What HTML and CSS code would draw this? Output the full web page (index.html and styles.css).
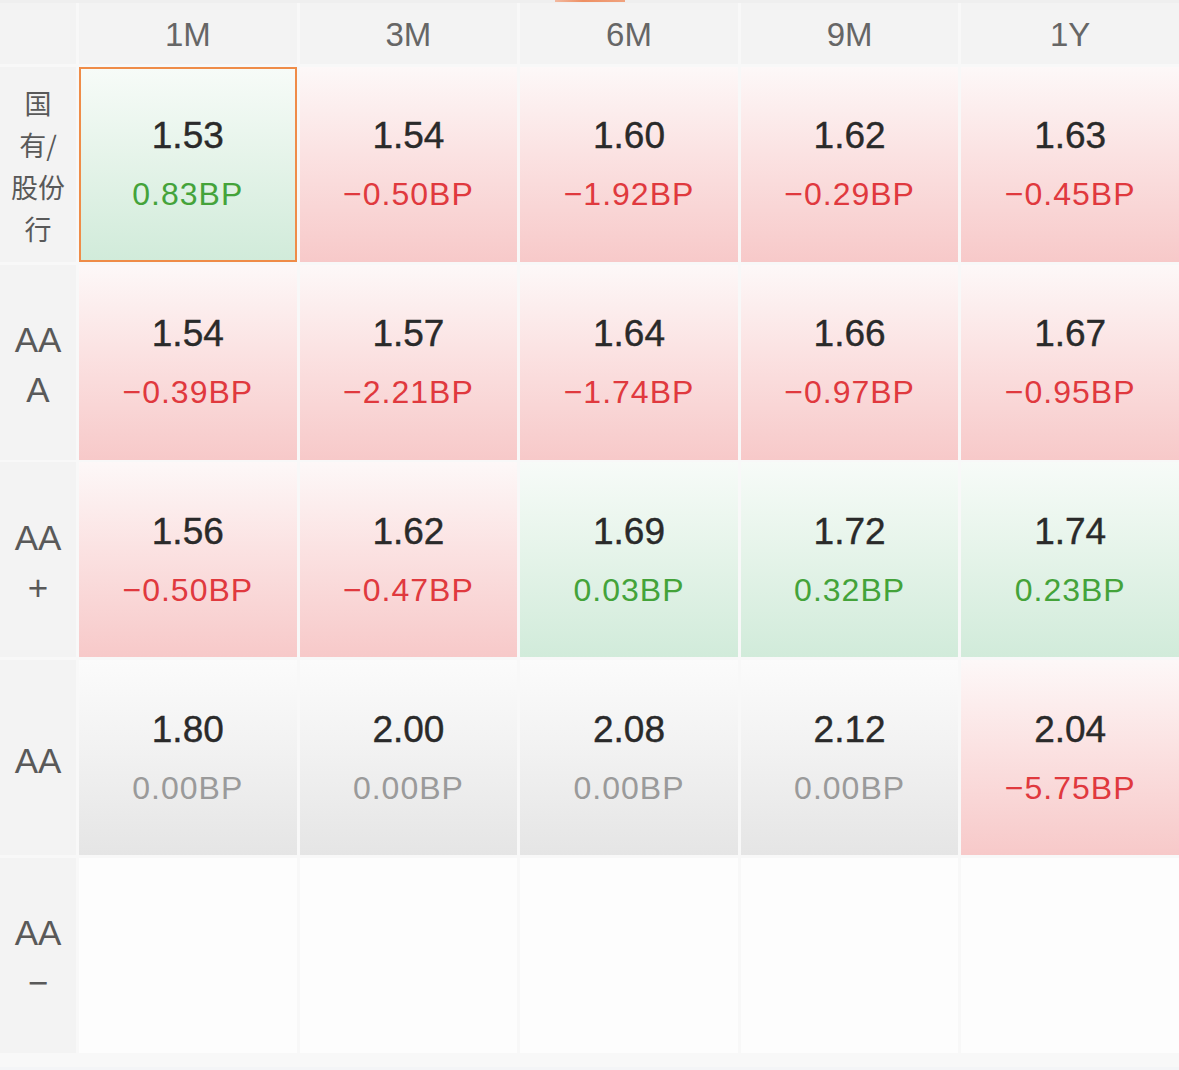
FILE: index.html
```html
<!DOCTYPE html>
<html lang="zh-CN">
<head>
    <meta charset="UTF-8">
    <meta name="viewport" content="width=device-width, initial-scale=1.0">
    <title>存单收益率矩阵</title>
    <link rel="stylesheet" href="styles.css">
</head>
<body>
    <div class="tab-strip">
        <span class="tab-indicator"></span>
    </div>

    <div class="matrix">
        <!-- header -->
        <div class="corner"></div>
        <div class="col-head">1M</div>
        <div class="col-head">3M</div>
        <div class="col-head">6M</div>
        <div class="col-head">9M</div>
        <div class="col-head">1Y</div>

        <!-- 国有/股份行 -->
        <div class="row-head cjk">国<br>有/<br>股份<br>行</div>
        <div class="cell up selected"><span class="rate">1.53</span><span class="bp">0.83BP</span></div>
        <div class="cell down"><span class="rate">1.54</span><span class="bp">−0.50BP</span></div>
        <div class="cell down"><span class="rate">1.60</span><span class="bp">−1.92BP</span></div>
        <div class="cell down"><span class="rate">1.62</span><span class="bp">−0.29BP</span></div>
        <div class="cell down"><span class="rate">1.63</span><span class="bp">−0.45BP</span></div>

        <!-- AAA -->
        <div class="row-head">AA<br>A</div>
        <div class="cell down"><span class="rate">1.54</span><span class="bp">−0.39BP</span></div>
        <div class="cell down"><span class="rate">1.57</span><span class="bp">−2.21BP</span></div>
        <div class="cell down"><span class="rate">1.64</span><span class="bp">−1.74BP</span></div>
        <div class="cell down"><span class="rate">1.66</span><span class="bp">−0.97BP</span></div>
        <div class="cell down"><span class="rate">1.67</span><span class="bp">−0.95BP</span></div>

        <!-- AA+ -->
        <div class="row-head">AA<br>+</div>
        <div class="cell down"><span class="rate">1.56</span><span class="bp">−0.50BP</span></div>
        <div class="cell down"><span class="rate">1.62</span><span class="bp">−0.47BP</span></div>
        <div class="cell up"><span class="rate">1.69</span><span class="bp">0.03BP</span></div>
        <div class="cell up"><span class="rate">1.72</span><span class="bp">0.32BP</span></div>
        <div class="cell up"><span class="rate">1.74</span><span class="bp">0.23BP</span></div>

        <!-- AA -->
        <div class="row-head">AA</div>
        <div class="cell flat"><span class="rate">1.80</span><span class="bp">0.00BP</span></div>
        <div class="cell flat"><span class="rate">2.00</span><span class="bp">0.00BP</span></div>
        <div class="cell flat"><span class="rate">2.08</span><span class="bp">0.00BP</span></div>
        <div class="cell flat"><span class="rate">2.12</span><span class="bp">0.00BP</span></div>
        <div class="cell down"><span class="rate">2.04</span><span class="bp">−5.75BP</span></div>

        <!-- AA- -->
        <div class="row-head">AA<br>−</div>
        <div class="cell empty"></div>
        <div class="cell empty"></div>
        <div class="cell empty"></div>
        <div class="cell empty"></div>
        <div class="cell empty"></div>
    </div>
</body>
</html>
```

FILE: styles.css
```css
body {
    margin: 0;
    padding: 0;
    background-color: #f4f5f7;
    font-family: "Liberation Sans", "Noto Sans CJK SC", sans-serif;
    color: #333;
}

.tab-strip {
    height: 3px;
    background-color: #efefef;
    display: flex;
    justify-content: center;
}

.tab-indicator {
    width: 70px;
    height: 2px;
    background: linear-gradient(90deg, #f2b9a0, #ee8f62 40%, #f0a27e);
}

.matrix {
    display: grid;
    grid-template-columns: 76px repeat(5, 1fr);
    grid-template-rows: 61px repeat(5, 195px);
    column-gap: 3px;
    row-gap: 2.75px;
    padding-bottom: 14px;
    background-color: #f8f8f8;
}

.corner,
.col-head,
.row-head {
    background-color: #f3f3f3;
    color: #666;
    display: flex;
    align-items: center;
    justify-content: center;
    text-align: center;
}

.col-head {
    font-size: 33px;
    padding-top: 3px;
}

.row-head {
    font-size: 35px;
    line-height: 50px;
    color: #595959;
    padding-top: 6px;
}

.row-head.cjk {
    font-family: "Noto Sans CJK SC", sans-serif;
    font-size: 27px;
    line-height: 42px;
    padding-top: 4px;
}

.cell {
    display: flex;
    flex-direction: column;
    align-items: center;
    justify-content: center;
    gap: 20px;
    box-sizing: border-box;
}

.rate {
    font-size: 37px;
    line-height: 40px;
    color: #2a2a2a;
    -webkit-text-stroke: 0.4px #2a2a2a;
}

.bp {
    font-size: 32px;
    line-height: 36px;
    letter-spacing: 1px;
}

.up {
    background: linear-gradient(180deg, #f7fbf8 0%, #e6f4ea 45%, #d1ebda 100%);
}

.up .bp {
    color: #44a33a;
}

.down {
    background: linear-gradient(180deg, #fdf8f8 0%, #fbe2e2 45%, #f7c9c9 100%);
}

.down .bp {
    color: #e0393e;
}

.flat {
    background: linear-gradient(180deg, #fbfbfb 0%, #f2f2f2 45%, #e5e5e5 100%);
}

.flat .bp {
    color: #9a9a9a;
}

.empty {
    background-color: #fdfdfd;
}

.selected {
    border: 2px solid #ef8c48;
}
```
